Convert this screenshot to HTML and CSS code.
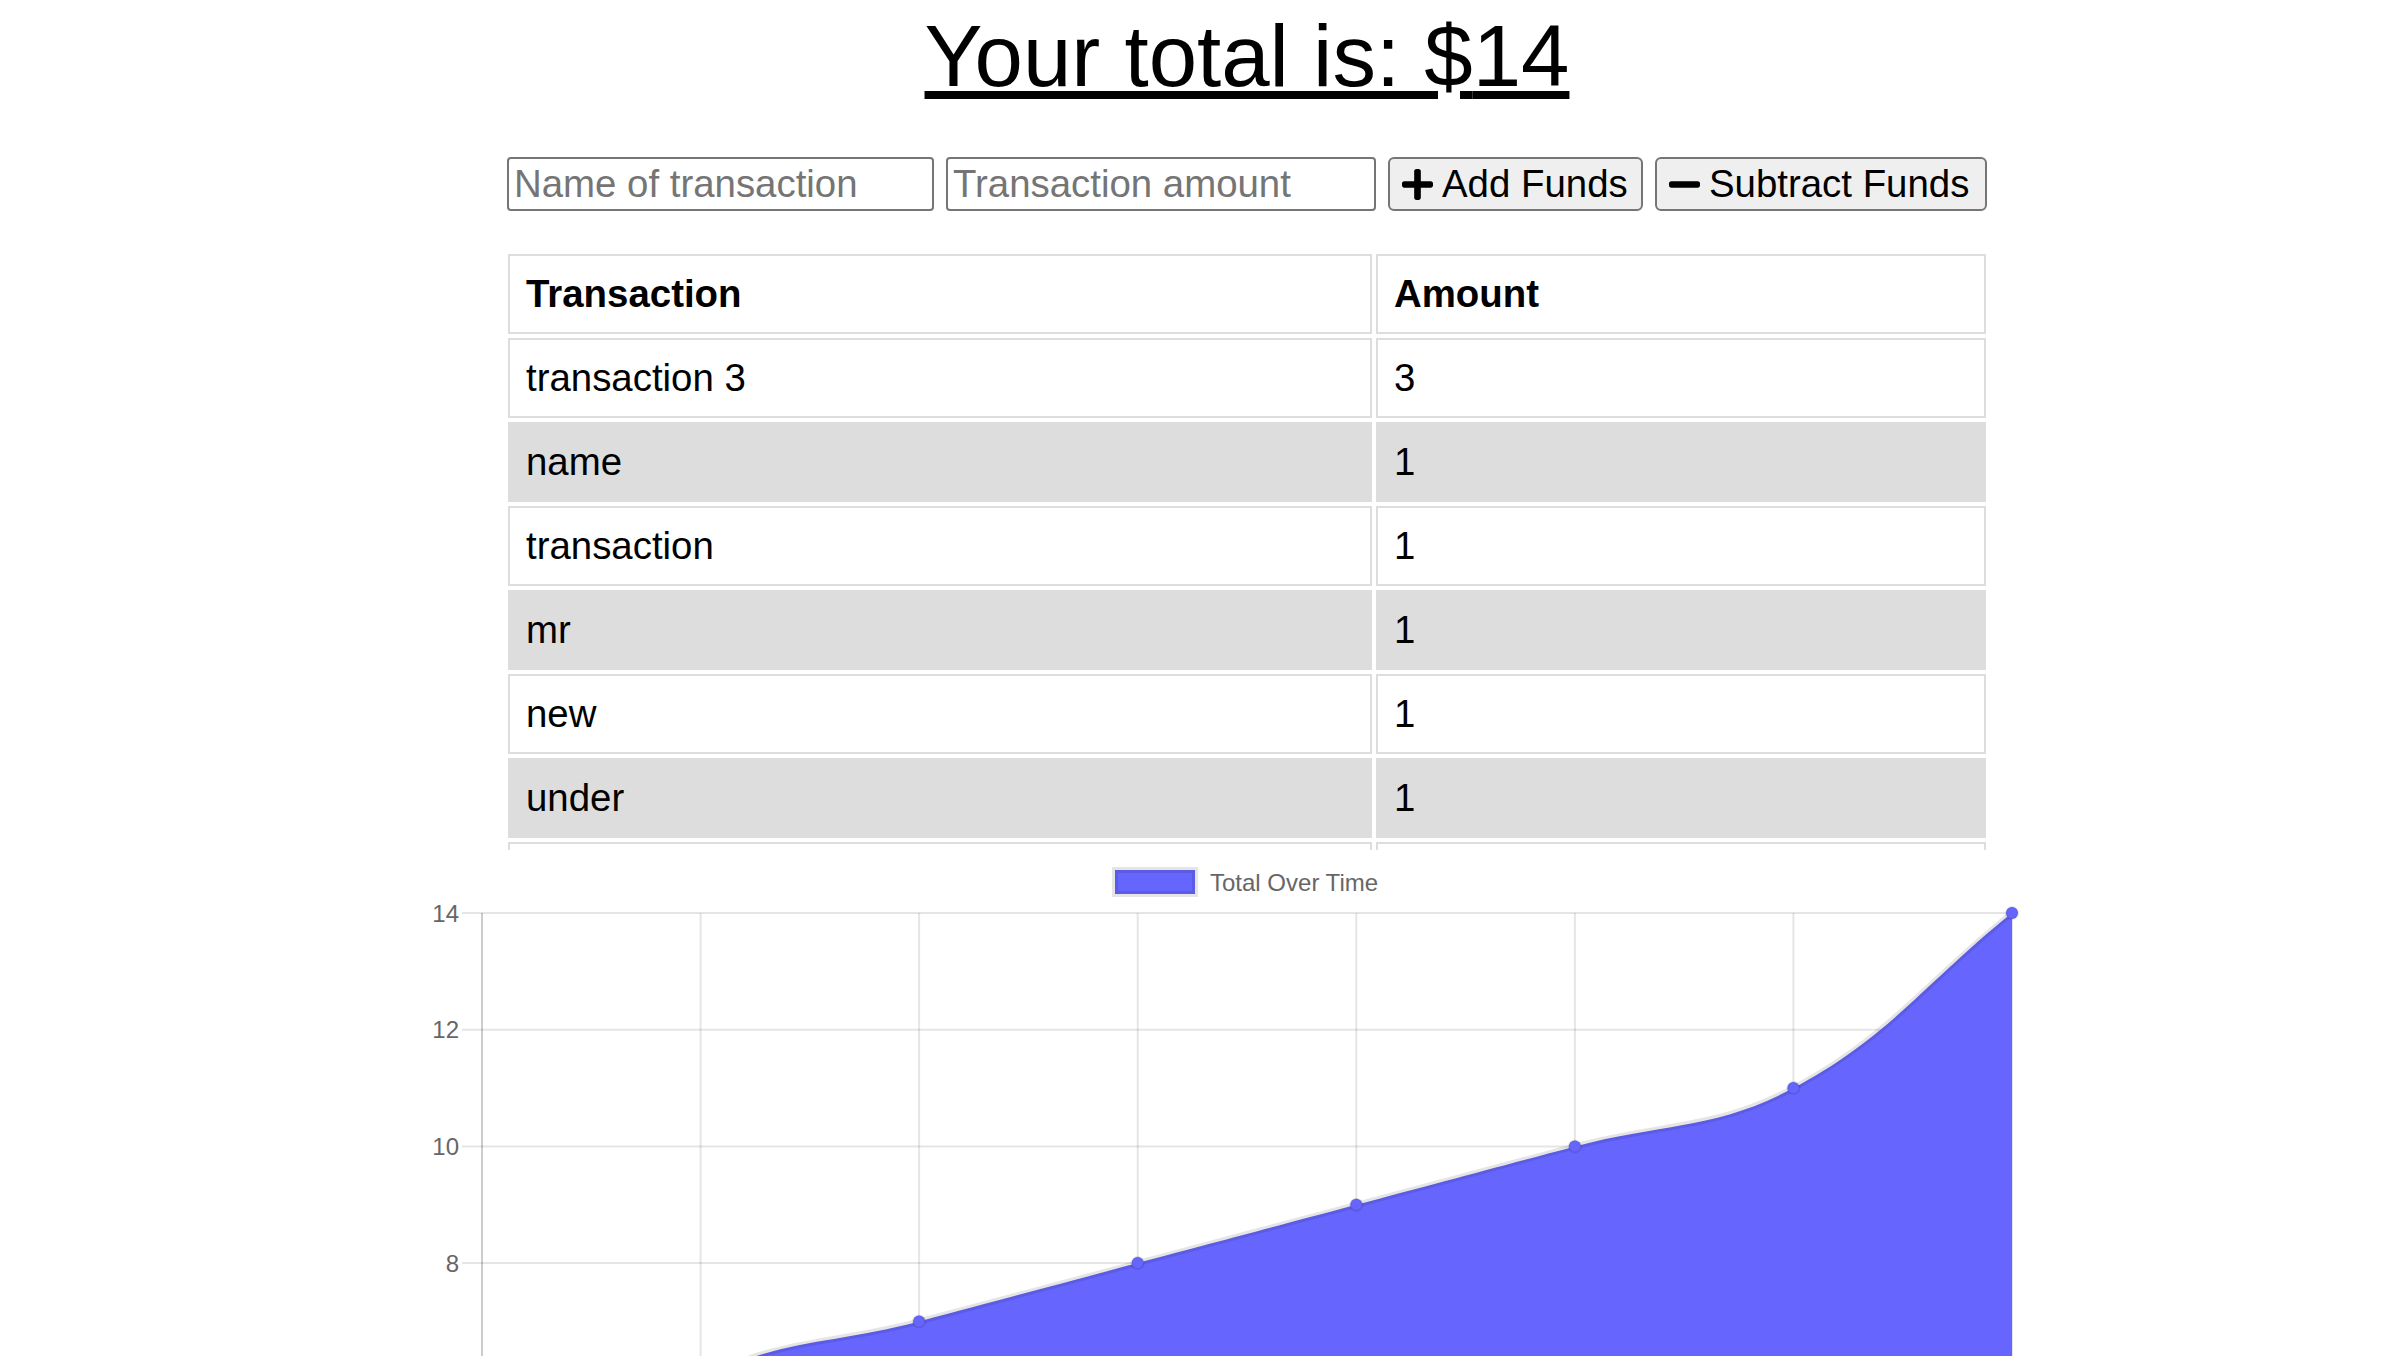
FILE: index.html
```html
<!DOCTYPE html>
<html lang="en">
<head>
<meta charset="utf-8">
<title>Budget Tracker</title>
<link rel="stylesheet" href="styles.css">
</head>
<body>
<div class="page">
  <div class="wrapper">
    <h1 class="total">Your total is: $<span class="total-num">14</span></h1>
    <div class="form">
      <input class="field field-name" type="text" placeholder="Name of transaction">
      <input class="field field-amount" type="number" placeholder="Transaction amount">
      <button class="btn btn-add" type="button">
        <svg class="ico" viewBox="0 32 448 448" aria-hidden="true"><path d="M416 208H272V64c0-17.67-14.33-32-32-32h-32c-17.67 0-32 14.33-32 32v144H32c-17.670 0-32 14.33-32 32v32c0 17.67 14.33 32 32 32h144v144c0 17.67 14.33 32 32 32h32c17.67 0 32-14.33 32-32V304h144c17.67 0 32-14.33 32-32v-32c0-17.67-14.33-32-32-32z"/></svg>
        <span>Add Funds</span>
      </button>
      <button class="btn btn-sub" type="button">
        <svg class="ico" viewBox="0 32 448 448" aria-hidden="true"><path d="M416 208H32c-17.67 0-32 14.33-32 32v32c0 17.67 14.33 32 32 32h384c17.67 0 32-14.33 32-32v-32c0-17.67-14.33-32-32-32z"/></svg>
        <span>Subtract Funds</span>
      </button>
    </div>
    <div class="tbl">
      <table>
        <colgroup><col class="col-name"><col class="col-amt"></colgroup>
        <thead>
          <tr><th>Transaction</th><th>Amount</th></tr>
        </thead>
        <tbody>
          <tr><td>transaction 3</td><td>3</td></tr>
          <tr><td>name</td><td>1</td></tr>
          <tr><td>transaction</td><td>1</td></tr>
          <tr><td>mr</td><td>1</td></tr>
          <tr><td>new</td><td>1</td></tr>
          <tr><td>under</td><td>1</td></tr>
          <tr><td></td><td></td></tr>
        </tbody>
      </table>
    </div>
  </div>
</div>
<div class="chart">
  <svg class="chart-svg" width="2386" height="506" viewBox="0 0 2386 506">
    <rect x="1115" y="20" width="80" height="24" fill="#6666ff" stroke="rgba(0,0,0,0.1)" stroke-width="6"/>
    <text class="legend-text" x="1210" y="41">Total Over Time</text>
    <g stroke="rgba(0,0,0,0.1)" stroke-width="2">
      <line x1="482" y1="63" x2="482" y2="506" stroke="rgba(0,0,0,0.2)"/>
      <line x1="700.6" y1="63" x2="700.6" y2="506"/>
      <line x1="919.1" y1="63" x2="919.1" y2="506"/>
      <line x1="1137.7" y1="63" x2="1137.7" y2="506"/>
      <line x1="1356.3" y1="63" x2="1356.3" y2="506"/>
      <line x1="1574.9" y1="63" x2="1574.9" y2="506"/>
      <line x1="1793.4" y1="63" x2="1793.4" y2="506"/>
      <line x1="2012" y1="63" x2="2012" y2="506"/>
    </g>
    <g stroke="rgba(0,0,0,0.1)" stroke-width="2">
      <line x1="462" y1="63" x2="2012" y2="63"/>
      <line x1="462" y1="179.7" x2="2012" y2="179.7"/>
      <line x1="462" y1="296.4" x2="2012" y2="296.4"/>
      <line x1="462" y1="413.1" x2="2012" y2="413.1"/>
    </g>
    <g class="tick">
      <text x="459" y="71.5">14</text>
      <text x="459" y="188.2">12</text>
      <text x="459" y="304.9">10</text>
      <text x="459" y="421.6">8</text>
    </g>
    <path fill="#6666ff" d="M482,704.9 C569.43,634.88 603.86,581.45 700.6,529.8 C778.76,488.07 831.67,494.84 919.1,471.5 C1006.53,448.16 1050.27,436.44 1137.7,413.1 C1225.13,389.76 1268.87,378.14 1356.3,354.8 C1443.73,331.46 1487.47,319.74 1574.9,296.4 C1662.33,273.06 1715.24,279.83 1793.4,238.1 C1890.13,186.45 1924.57,133.02 2012,63 L2012,763 L482,763 Z"/>
    <path fill="none" stroke="rgba(0,0,0,0.1)" stroke-width="6" d="M482,704.9 C569.43,634.88 603.86,581.45 700.6,529.8 C778.76,488.07 831.67,494.84 919.1,471.5 C1006.53,448.16 1050.27,436.44 1137.7,413.1 C1225.13,389.76 1268.87,378.14 1356.3,354.8 C1443.73,331.46 1487.47,319.74 1574.9,296.4 C1662.33,273.06 1715.24,279.83 1793.4,238.1 C1890.13,186.45 1924.57,133.02 2012,63"/>
    <g fill="#6666ff" stroke="rgba(0,0,0,0.1)" stroke-width="2">
      <circle cx="919.1" cy="471.5" r="6"/>
      <circle cx="1137.7" cy="413.1" r="6"/>
      <circle cx="1356.3" cy="354.8" r="6"/>
      <circle cx="1574.9" cy="296.4" r="6"/>
      <circle cx="1793.4" cy="238.1" r="6"/>
      <circle cx="2012" cy="63" r="6"/>
    </g>
  </svg>
</div>
</body>
</html>
```

FILE: styles.css
```css
html, body {
  margin: 0;
  padding: 0;
  overflow: hidden;
  background: #fff;
}

body {
  font-family: "Liberation Sans", Arial, Helvetica, sans-serif;
  color: #000;
}

.page {
  padding-left: 108px;
}

.wrapper {
  width: 1480px;
  margin: 0 auto;
}

.total {
  margin: 0;
  padding-top: 6px;
  height: 103px;
  font-size: 87px;
  font-weight: normal;
  line-height: normal;
  text-align: center;
  text-decoration: underline;
}

.form {
  display: flex;
  gap: 12px;
  margin-top: 48px;
  height: 54px;
}

.field {
  box-sizing: border-box;
  height: 54px;
  margin: 0;
  padding: 0 5px;
  border: 2px solid #767676;
  border-radius: 4px;
  font-family: "Liberation Sans", Arial, sans-serif;
  font-size: 38.4px;
  color: #000;
  background: #fff;
  -moz-appearance: textfield;
  appearance: textfield;
}

.field::placeholder {
  color: #757575;
}

.field::-webkit-outer-spin-button,
.field::-webkit-inner-spin-button {
  -webkit-appearance: none;
  margin: 0;
}

.field-name {
  width: 427px;
}

.field-amount {
  width: 430px;
}

.btn {
  box-sizing: border-box;
  display: flex;
  align-items: center;
  gap: 9px;
  height: 54px;
  margin: 0;
  padding: 0 12px;
  border: 2px solid #767676;
  border-radius: 6px;
  background: #efefef;
  color: #000;
  font-family: "Liberation Sans", Arial, sans-serif;
  font-size: 38.4px;
  white-space: nowrap;
}

.btn-add {
  width: 255px;
}

.btn-sub {
  width: 332px;
}

.ico {
  width: 31px;
  height: 31px;
  flex: none;
  fill: #000;
}

.tbl {
  margin: 39px -3px 0;
  height: 600px;
  overflow: hidden;
}

.tbl table {
  width: 1486px;
  table-layout: fixed;
  border-collapse: separate;
  border-spacing: 4px;
  margin: 0;
  text-align: left;
  font-size: 38.4px;
}

.col-name {
  width: 864px;
}

.col-amt {
  width: 610px;
}

.tbl th,
.tbl td {
  box-sizing: border-box;
  height: 80px;
  padding: 0 16px;
  border: 2px solid #ddd;
  line-height: 44px;
  vertical-align: middle;
}

.tbl th {
  font-weight: bold;
}

.tbl tbody tr:nth-child(even) {
  background: #ddd;
}

.chart {
  height: 506px;
}

.chart-svg {
  display: block;
}

.legend-text {
  font-family: "Liberation Sans", Arial, sans-serif;
  font-size: 24px;
  fill: #666;
}

.tick text {
  font-family: "Liberation Sans", Arial, sans-serif;
  font-size: 24px;
  fill: #666;
  text-anchor: end;
}
```
